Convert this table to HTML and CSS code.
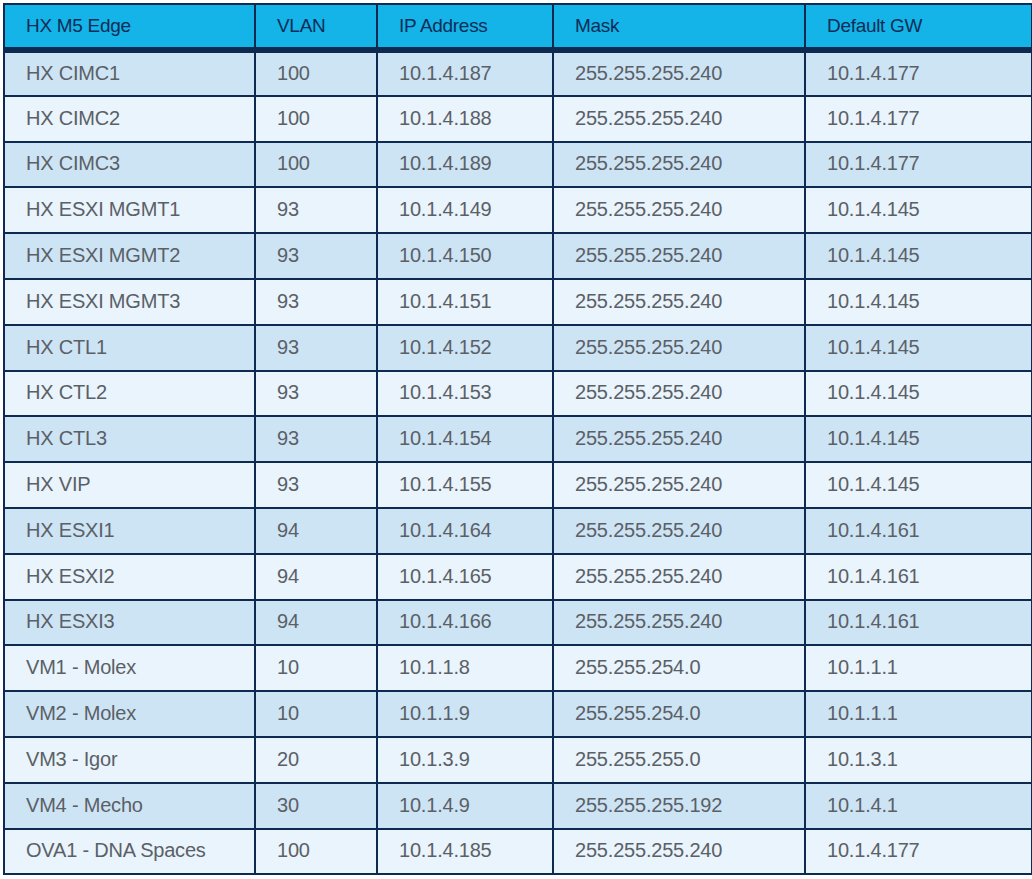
FILE: index.html
```html
<!DOCTYPE html>
<html>
<head>
<meta charset="utf-8">
<link rel="stylesheet" href="styles.css">
</head>
<body>
<table class="net">
<colgroup>
<col class="c1"><col class="c2"><col class="c3"><col class="c4"><col class="c5">
</colgroup>
<thead>
<tr><th>HX M5 Edge</th><th>VLAN</th><th>IP Address</th><th>Mask</th><th>Default GW</th></tr>
</thead>
<tbody>
<tr><td>HX CIMC1</td><td>100</td><td>10.1.4.187</td><td>255.255.255.240</td><td>10.1.4.177</td></tr>
<tr><td>HX CIMC2</td><td>100</td><td>10.1.4.188</td><td>255.255.255.240</td><td>10.1.4.177</td></tr>
<tr><td>HX CIMC3</td><td>100</td><td>10.1.4.189</td><td>255.255.255.240</td><td>10.1.4.177</td></tr>
<tr><td>HX ESXI MGMT1</td><td>93</td><td>10.1.4.149</td><td>255.255.255.240</td><td>10.1.4.145</td></tr>
<tr><td>HX ESXI MGMT2</td><td>93</td><td>10.1.4.150</td><td>255.255.255.240</td><td>10.1.4.145</td></tr>
<tr><td>HX ESXI MGMT3</td><td>93</td><td>10.1.4.151</td><td>255.255.255.240</td><td>10.1.4.145</td></tr>
<tr><td>HX CTL1</td><td>93</td><td>10.1.4.152</td><td>255.255.255.240</td><td>10.1.4.145</td></tr>
<tr><td>HX CTL2</td><td>93</td><td>10.1.4.153</td><td>255.255.255.240</td><td>10.1.4.145</td></tr>
<tr><td>HX CTL3</td><td>93</td><td>10.1.4.154</td><td>255.255.255.240</td><td>10.1.4.145</td></tr>
<tr><td>HX VIP</td><td>93</td><td>10.1.4.155</td><td>255.255.255.240</td><td>10.1.4.145</td></tr>
<tr><td>HX ESXI1</td><td>94</td><td>10.1.4.164</td><td>255.255.255.240</td><td>10.1.4.161</td></tr>
<tr><td>HX ESXI2</td><td>94</td><td>10.1.4.165</td><td>255.255.255.240</td><td>10.1.4.161</td></tr>
<tr><td>HX ESXI3</td><td>94</td><td>10.1.4.166</td><td>255.255.255.240</td><td>10.1.4.161</td></tr>
<tr><td>VM1 - Molex</td><td>10</td><td>10.1.1.8</td><td>255.255.254.0</td><td>10.1.1.1</td></tr>
<tr><td>VM2 - Molex</td><td>10</td><td>10.1.1.9</td><td>255.255.254.0</td><td>10.1.1.1</td></tr>
<tr><td>VM3 - Igor</td><td>20</td><td>10.1.3.9</td><td>255.255.255.0</td><td>10.1.3.1</td></tr>
<tr><td>VM4 - Mecho</td><td>30</td><td>10.1.4.9</td><td>255.255.255.192</td><td>10.1.4.1</td></tr>
<tr><td>OVA1 - DNA Spaces</td><td>100</td><td>10.1.4.185</td><td>255.255.255.240</td><td>10.1.4.177</td></tr>
</tbody>
</table>
</body>
</html>
```
FILE: styles.css
```css
html, body {
  margin: 0;
  padding: 0;
  background: #ffffff;
}
body {
  padding: 3px 0 0 3px;
  font-family: "Liberation Sans", Arial, sans-serif;
}
.net {
  border-collapse: collapse;
  table-layout: fixed;
  width: 1028px;
  border: 2px solid #0e2a50;
}
.c1 { width: 251px; }
.c2 { width: 122px; }
.c3 { width: 176px; }
.c4 { width: 252px; }
.c5 { width: 227px; }
.net th, .net td {
  border: 2px solid #0e2a50;
  text-align: left;
  padding: 0 0 0 21px;
  white-space: nowrap;
}
.net th {
  background: #14b3e8;
  color: #0d2d57;
  font-weight: normal;
  font-size: 19px;
  letter-spacing: -0.3px;
  height: 42px;
  border-bottom: 6px solid #0e2a50;
  padding-top: 0;
}
.net tbody tr {
  height: 45.8px;
}
.net td {
  color: #5b6066;
  font-size: 20px;
  letter-spacing: -0.2px;
  padding-top: 0;
  padding-bottom: 1px;
}
.net tbody tr:nth-child(odd) td { background: #cde4f5; }
.net tbody tr:nth-child(even) td { background: #e9f4fc; }
```
